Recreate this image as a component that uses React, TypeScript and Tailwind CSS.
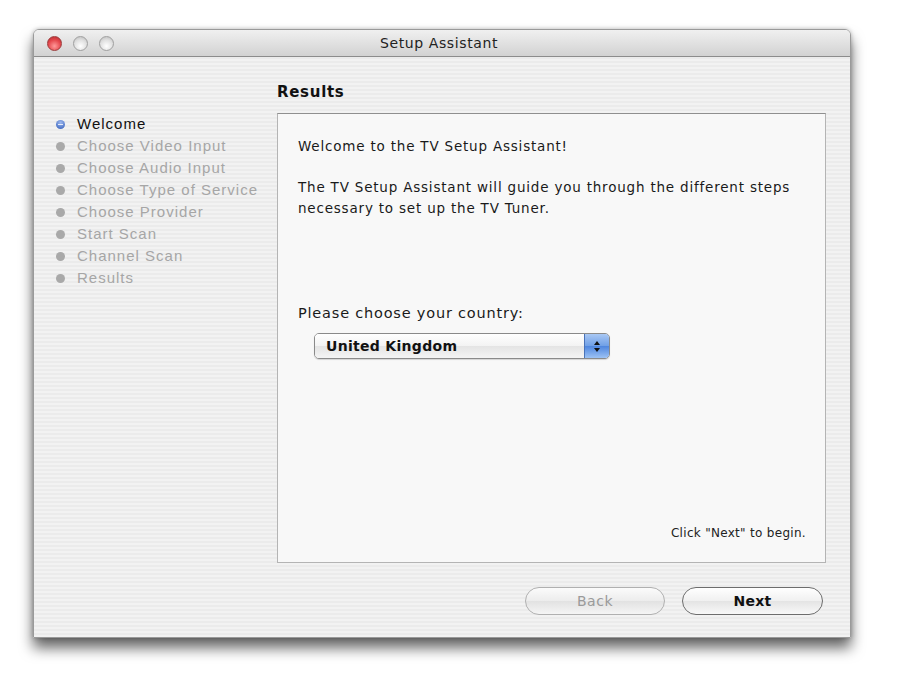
const steps = [
  "Welcome",
  "Choose Video Input",
  "Choose Audio Input",
  "Choose Type of Service",
  "Choose Provider",
  "Start Scan",
  "Channel Scan",
  "Results",
];

const TrafficLight = ({ red }: { red?: boolean }) => (
  <span
    className={
      red
        ? "block w-[15px] h-[15px] rounded-full border border-[#9c3b3b] bg-[radial-gradient(circle_at_50%_70%,#ff9a9a_0%,#e5484d_55%,#b0272c_100%)]"
        : "block w-[15px] h-[15px] rounded-full border border-[#a0a0a0] bg-[radial-gradient(circle_at_50%_70%,#ffffff_0%,#e0e0e0_55%,#b8b8b8_100%)]"
    }
  />
);

const App = () => {
  return (
    <div className="w-[904px] h-[696px] bg-white pt-[29px] pl-[33px]">
      <div className="w-[818px] h-[609px] flex flex-col rounded-t-[6px] border border-[#9a9a9a] overflow-hidden shadow-[0_10px_14px_rgba(0,0,0,0.6),0_0_4px_rgba(0,0,0,0.25)]">
        {/* title bar */}
        <div className="relative h-[27px] flex items-center pl-[13px] gap-[11px] border-b border-[#8c8c8c] bg-[linear-gradient(#f0f0f0,#d2d2d2)]">
          <TrafficLight red />
          <TrafficLight />
          <TrafficLight />
          <span className="absolute inset-0 flex items-center justify-center pr-[6px] text-[14px] text-[#222] font-['DejaVu_Sans',sans-serif] tracking-[0.6px]">
            Setup Assistant
          </span>
        </div>

        {/* body */}
        <div className="flex-1 flex bg-[repeating-linear-gradient(180deg,#ebebeb_0px,#ebebeb_2px,#f2f2f2_2px,#f2f2f2_4px)]">
          <ul className="w-[243px] pt-[56px] pl-[22px] font-['Liberation_Sans',Arial,sans-serif] text-[15px] tracking-[1px]">
            {steps.map((s, i) => (
              <li key={s} className="h-[22px] flex items-center gap-[12px]">
                {i === 0 ? (
                  <span className="w-[9px] h-[9px] rounded-full bg-[radial-gradient(circle_at_50%_30%,#9db8ee,#2f5bb8)] flex items-center justify-center">
                    <span className="block w-[5px] h-[1px] bg-white/80" />
                  </span>
                ) : (
                  <span className="w-[9px] h-[9px] rounded-full bg-[#a9a9a9]" />
                )}
                <span className={i === 0 ? "text-[#111]" : "text-[#a6a6a6]"}>
                  {s}
                </span>
              </li>
            ))}
          </ul>

          <div className="flex-1 flex flex-col pt-[25px] pr-[24px] font-['DejaVu_Sans',sans-serif]">
            <h2 className="h-[20px] mb-[11px] text-[15px] font-bold tracking-[0.7px] text-[#111] leading-[20px]">
              Results
            </h2>
            <div className="h-[450px] w-[549px] flex flex-col bg-[#f8f8f8] border border-[#b4b4b4] border-t-[#8f8f8f] pt-[22px] pl-[20px] pr-[19px] pb-[20px] text-[13.5px] tracking-[0.8px] text-[#1a1a1a]">
              <p className="leading-[21px]">Welcome to the TV Setup Assistant!</p>
              <p className="mt-[20px] leading-[21px] whitespace-nowrap">
                The TV Setup Assistant will guide you through the different steps
                <br />
                necessary to set up the TV Tuner.
              </p>
              <p className="mt-[84px] text-[14.5px] leading-[21px]">
                Please choose your country:
              </p>
              <div className="mt-[9px] ml-[16px] w-[296px] h-[26px] flex rounded-[5px] border border-[#8a8a8a] overflow-hidden shadow-[0_1px_1px_rgba(0,0,0,0.15)]">
                <div className="flex-1 flex items-center pl-[11px] text-[14px] font-bold tracking-[0.3px] text-[#111] bg-[linear-gradient(#ffffff,#f3f3f3_50%,#e4e4e4_51%,#f4f4f4)]">
                  United Kingdom
                </div>
                <div className="w-[25px] flex flex-col items-center justify-center gap-[3px] border-l border-[#4a73b8] bg-[linear-gradient(#a9c8f4,#6f9fe6_50%,#4f86df_51%,#9cc2f4)]">
                  <span className="block w-0 h-0 border-l-[3px] border-r-[3px] border-b-[4px] border-l-transparent border-r-transparent border-b-[#111]" />
                  <span className="block w-0 h-0 border-l-[3px] border-r-[3px] border-t-[4px] border-l-transparent border-r-transparent border-t-[#111]" />
                </div>
              </div>
              <div className="flex-1" />
              <p className="self-end text-[12px] tracking-[0.3px] text-[#222]">
                Click "Next" to begin.
              </p>
            </div>
            <div className="flex justify-end gap-[17px] mt-[24px] pr-[3px]">
              <button className="w-[140px] h-[28px] rounded-full border border-[#b0b0b0] bg-[linear-gradient(#fbfbfb,#ececec_50%,#e2e2e2_51%,#f5f5f5)] text-[14px] tracking-[0.5px] text-[#9a9a9a]">
                Back
              </button>
              <button className="w-[141px] h-[28px] rounded-full border border-[#6d6d6d] bg-[linear-gradient(#ffffff,#f0f0f0_50%,#e4e4e4_51%,#f8f8f8)] text-[14px] font-bold tracking-[0.3px] text-[#111]">
                Next
              </button>
            </div>
          </div>
        </div>
      </div>
    </div>
  );
};

export default App;
